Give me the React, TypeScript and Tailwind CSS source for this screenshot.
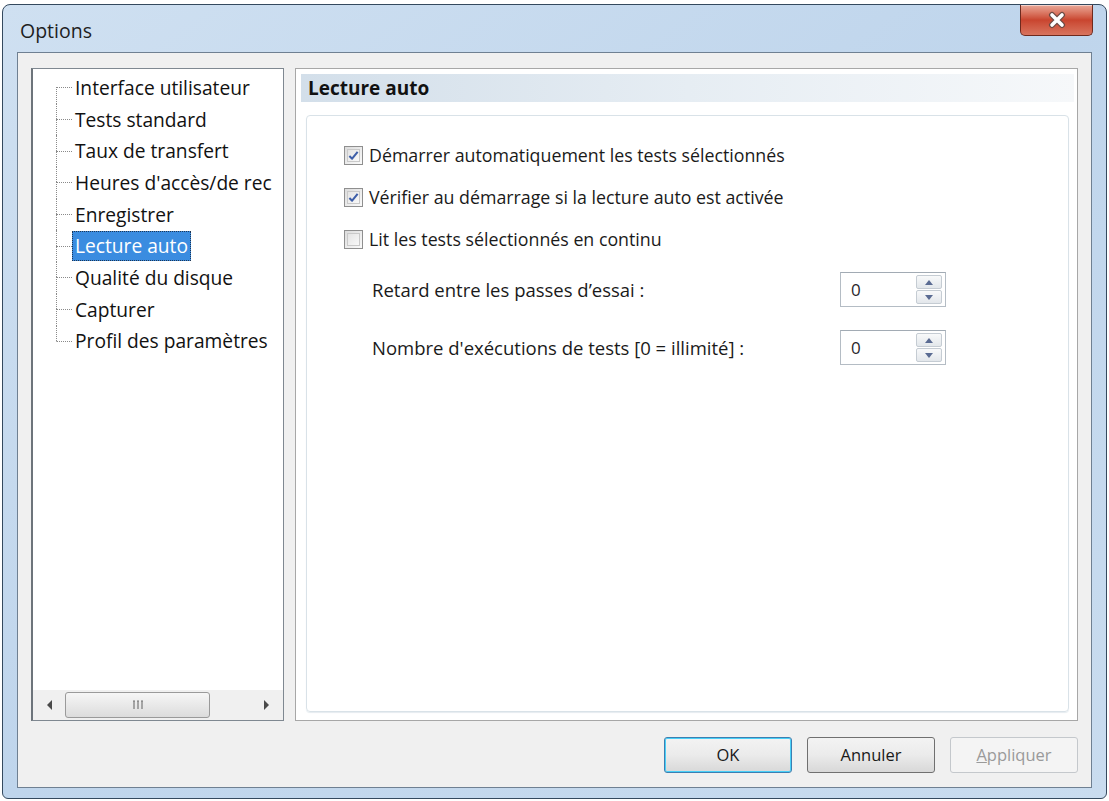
import { useState } from 'react'

const font = { fontFamily: '"Open Sans", "Noto Sans", sans-serif' }

const treeItems = [
  'Interface utilisateur',
  'Tests standard',
  'Taux de transfert',
  "Heures d'accès/de rec",
  'Enregistrer',
  'Lecture auto',
  'Qualité du disque',
  'Capturer',
  'Profil des paramètres',
]

function CloseButton() {
  return (
    <div className="flex h-[31px] w-[73px] items-center justify-center rounded-b-[5px] border border-t-0 border-[#6e2a1e] bg-gradient-to-b from-[#e9a898] via-[#c9452f] to-[#d8745e] shadow-[inset_0_1px_0_rgba(255,255,255,0.5)]">
      <svg width="22" height="18" viewBox="0 0 22 18">
        <path d="M6 4 L16 14 M16 4 L6 14" stroke="#6b4a44" strokeWidth="6" strokeLinecap="round" />
        <path d="M6 4 L16 14 M16 4 L6 14" stroke="#ffffff" strokeWidth="3.6" strokeLinecap="round" />
      </svg>
    </div>
  )
}

function TreeRow({ label, first, last, selected }: { label: string; first: boolean; last: boolean; selected: boolean }) {
  return (
    <div className="flex h-[31.7px] items-stretch">
      <div className="flex w-[16px] flex-col">
        <div className={`flex-1 border-l border-dotted ${first ? 'border-transparent' : 'border-[#8a8a8a]'}`} />
        <div className={`flex-1 border-l border-t border-dotted border-t-[#8a8a8a] ${last ? 'border-l-transparent' : 'border-l-[#8a8a8a]'}`} />
      </div>
      <div className="flex items-center">
        <span
          className={`whitespace-nowrap border px-[2px] py-[1px] text-[19.2px] leading-[26px] ${
            selected ? 'border-dotted border-[#1d3655] bg-[#3a8ce0] text-white' : 'border-transparent text-[#111]'
          }`}
        >
          {label}
        </span>
      </div>
    </div>
  )
}

function Tree() {
  return (
    <div className="flex w-[253px] flex-col border border-[#7f8891] border-l-2 border-l-[#6d747b] bg-white">
      <div className="flex-1 overflow-hidden pl-[23px] pt-[3px]">
        {treeItems.map((t, i) => (
          <TreeRow key={t} label={t} first={i === 0} last={i === treeItems.length - 1} selected={t === 'Lecture auto'} />
        ))}
      </div>
      <div className="flex h-[30px] items-center bg-[#f0f0f0] px-[2px]">
        <div className="flex w-[30px] items-center justify-center">
          <svg width="8" height="12" viewBox="0 0 8 12">
            <path d="M6 1 L1 6 L6 11 Z" fill="#4a4a4a" />
          </svg>
        </div>
        <div className="flex h-[26px] w-[145px] items-center justify-center rounded-[3px] border border-[#9a9a9a] bg-gradient-to-b from-[#f6f6f6] to-[#dcdcdc]">
          <svg width="12" height="10" viewBox="0 0 12 10">
            <path d="M2 1 V9 M6 1 V9 M10 1 V9" stroke="#777" strokeWidth="1.2" />
            <path d="M1 1 H3 M5 1 H7 M9 1 H11" stroke="#777" strokeWidth="1" />
          </svg>
        </div>
        <div className="flex-1" />
        <div className="flex w-[30px] items-center justify-center">
          <svg width="8" height="12" viewBox="0 0 8 12">
            <path d="M2 1 L7 6 L2 11 Z" fill="#4a4a4a" />
          </svg>
        </div>
      </div>
    </div>
  )
}

function Checkbox({ checked, label, onToggle }: { checked: boolean; label: string; onToggle: () => void }) {
  return (
    <label className="flex h-[42px] cursor-default items-center gap-[6px]" onClick={onToggle}>
      <span className="flex h-[19px] w-[19px] shrink-0 items-center justify-center border border-[#8f8f8f] bg-gradient-to-br from-[#dcdcdc] to-[#fafafa] p-[2px]">
        <span className="flex h-full w-full items-center justify-center border border-[#c9c9c9] bg-gradient-to-br from-[#e4e4e4] to-[#f8f8f8]">
          {checked && (
            <svg width="12" height="11" viewBox="0 0 12 11">
              <path d="M1.5 6 L4.5 9 L10.5 1.5" fill="none" stroke="#3d5ea8" strokeWidth="2.2" strokeLinejoin="round" />
            </svg>
          )}
        </span>
      </span>
      <span className="whitespace-nowrap text-[17.8px] text-[#1a1a1a]">{label}</span>
    </label>
  )
}

function Spinner({ value }: { value: string }) {
  return (
    <div className="flex h-[35px] w-[106px] shrink-0 border border-[#b4bcc4] border-t-[#a2abb4] bg-white p-[1px]">
      <div className="flex flex-1 items-center pl-[9px] text-[17px] text-[#2a1f2a]">{value}</div>
      <div className="flex w-[28px] flex-col gap-[1px] pr-[2px] py-[1px]">
        {['M1 6 L5 1 L9 6 Z', 'M1 1 L5 6 L9 1 Z'].map((d) => (
          <div
            key={d}
            className="flex flex-1 items-center justify-center rounded-[2px] border border-[#c5ccd3] bg-gradient-to-b from-[#f8f9fa] to-[#e3e7eb]"
          >
            <svg width="10" height="7" viewBox="0 0 10 7">
              <path d={d} fill="#5a6b92" />
            </svg>
          </div>
        ))}
      </div>
    </div>
  )
}

function Button({ label, variant }: { label: React.ReactNode; variant: 'default' | 'normal' | 'disabled' }) {
  const cls =
    variant === 'default'
      ? 'border-[#3c7fb1] shadow-[inset_0_0_0_1px_#48d0f8] text-[#1a1a1a]'
      : variant === 'normal'
        ? 'border-[#707070] text-[#1a1a1a]'
        : 'border-[#c4c8cc] text-[#9a9a9a]'
  const bg = variant === 'disabled' ? 'bg-[#f4f4f4]' : 'bg-gradient-to-b from-[#f3f3f3] via-[#ebebeb] to-[#d8d8d8]'
  return (
    <div className={`flex h-[36px] w-[128px] items-center justify-center rounded-[3px] border text-[16.5px] ${cls} ${bg}`}>
      {label}
    </div>
  )
}

export default function App() {
  const [checks, setChecks] = useState([true, true, false])
  const toggle = (i: number) => setChecks((c) => c.map((v, j) => (j === i ? !v : v)))

  return (
    <div className="h-[801px] w-[1109px] bg-white pl-[2px] pr-[2px] pt-[4px]" style={font}>
      <div className="flex h-[795px] flex-col rounded-t-[8px] rounded-b-[6px] border border-[#34495e] bg-gradient-to-br from-[#cfe0f1] via-[#bfd5ec] to-[#c9dcef] px-[14px] pb-[10px]">
        <div className="flex h-[47px] items-start justify-between">
          <div className="pl-[3px] pt-[11px] text-[19.5px] text-[#1e1e1e]">Options</div>
          <div className="-mr-[1px]">
            <CloseButton />
          </div>
        </div>
        <div className="flex flex-1 flex-col border border-[#6f8092] bg-[#f0f0f0] px-[13px] pb-[14px] pt-[15px]">
          <div className="flex flex-1 gap-[11px]">
            <Tree />
            <div className="flex flex-1 flex-col border border-[#a7a7a7] bg-white p-[5px] pr-[3px]">
              <div className="flex h-[28px] items-center bg-gradient-to-r from-[#d3dfea] via-[#e6edf3] to-[#f6f8fa] pl-[7px] text-[19px] font-bold text-[#111]">
                Lecture auto
              </div>
              <div className="mx-[5px] mb-[3px] mt-[13px] flex flex-1 flex-col rounded-[4px] border border-[#d9e2e8] px-[37px] pt-[18px] shadow-[0_1px_1px_#e6ecf0]">
                <Checkbox checked={checks[0]} label="Démarrer automatiquement les tests sélectionnés" onToggle={() => toggle(0)} />
                <Checkbox checked={checks[1]} label="Vérifier au démarrage si la lecture auto est activée" onToggle={() => toggle(1)} />
                <Checkbox checked={checks[2]} label="Lit les tests sélectionnés en continu" onToggle={() => toggle(2)} />
                <div className="mt-[12px] flex flex-col gap-[23px] pl-[28px] pr-[85px]">
                  <div className="flex items-center justify-between">
                    <span className="text-[18.5px] text-[#1a1a1a]">Retard entre les passes d’essai :</span>
                    <Spinner value="0" />
                  </div>
                  <div className="flex items-center justify-between">
                    <span className="text-[18.5px] text-[#1a1a1a]">Nombre d'exécutions de tests [0 = illimité] :</span>
                    <Spinner value="0" />
                  </div>
                </div>
              </div>
            </div>
          </div>
          <div className="mt-[16px] flex justify-end gap-[15px]">
            <Button label="OK" variant="default" />
            <Button label="Annuler" variant="normal" />
            <Button
              label={
                <span>
                  <span className="underline">A</span>ppliquer
                </span>
              }
              variant="disabled"
            />
          </div>
        </div>
      </div>
    </div>
  )
}
